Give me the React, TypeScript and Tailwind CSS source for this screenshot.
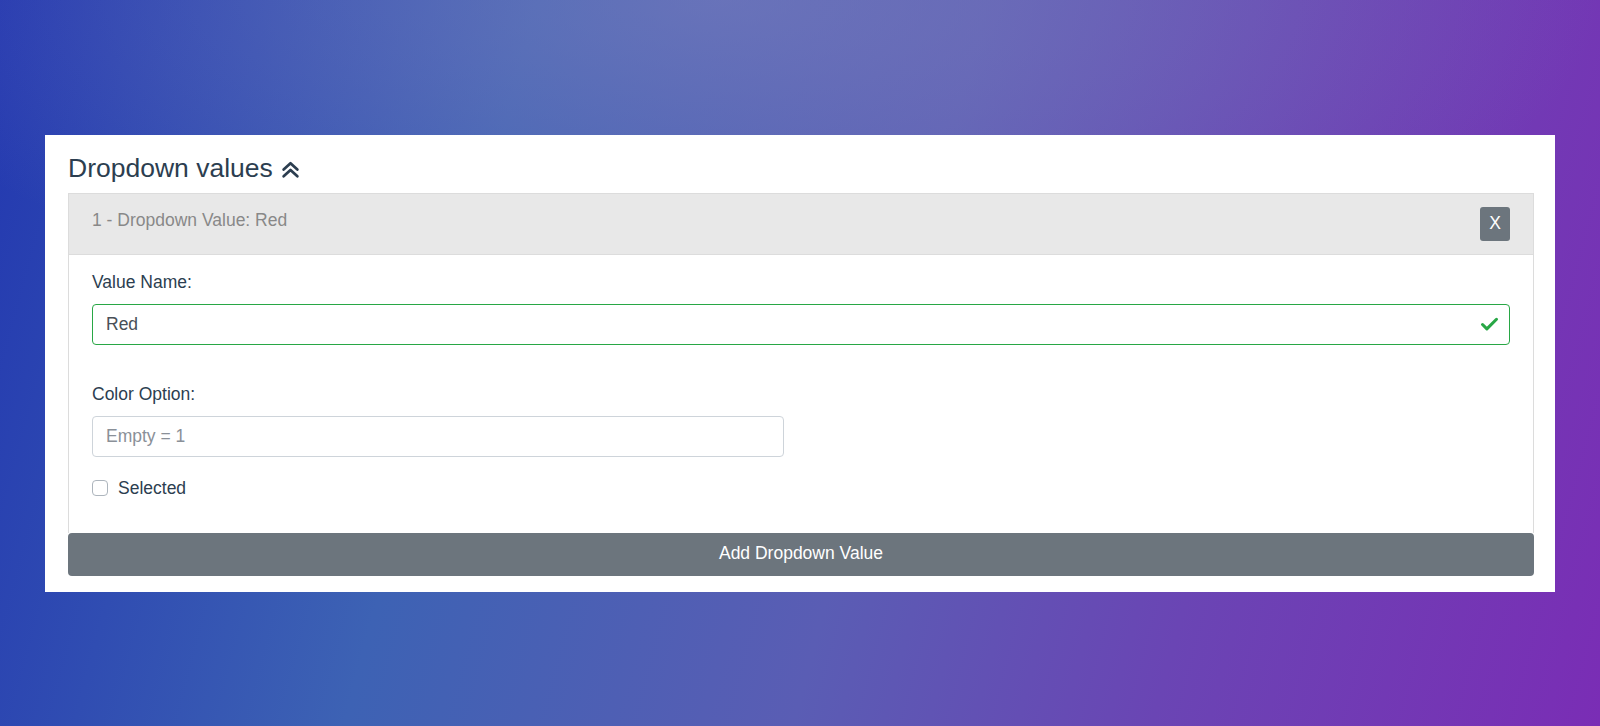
import { Check } from "lucide-react";

function ChevronsUp() {
  return (
    <svg width="19" height="19" viewBox="0 0 18 18" fill="none" className="ml-[8px] mt-[2px]">
      <polyline points="2.5,9 9,3 15.5,9" stroke="#2c3e50" strokeWidth="2.6" strokeLinecap="round" strokeLinejoin="round" />
      <polyline points="2.5,15.5 9,9.5 15.5,15.5" stroke="#2c3e50" strokeWidth="2.6" strokeLinecap="round" strokeLinejoin="round" />
    </svg>
  );
}

export default function App() {
  return (
    <div className="min-h-screen w-full flex items-center px-[45px] bg-[radial-gradient(ellipse_55%_45%_at_45%_0%,rgba(130,130,190,0.55),transparent),linear-gradient(105deg,#2338b0_0%,#3d62b4_30%,#5a5db4_55%,#6a45b4_75%,#7a2db5_100%)] font-['Liberation_Sans',Arial,sans-serif]">
      <div className="w-full bg-white pt-[18px] pb-[16px] px-[23px] pr-[21px]">
        <div className="flex items-center mb-[9px] text-[26.5px] leading-[31px] text-[#2c3e50]">
          <span>Dropdown values</span>
          <ChevronsUp />
        </div>

        <div className="border border-[#dcdcdc] border-b-0">
          <div className="h-[61px] bg-[#e8e8e8] border-b border-[#dcdcdc] flex items-start justify-between px-[23px]">
            <span className="pt-[14px] text-[17.5px] leading-[24px] text-[#888888]">1 - Dropdown Value: Red</span>
            <button className="mt-[13px] w-[30px] h-[34px] bg-[#6c757d] rounded-[3px] text-white text-[17.5px] leading-none">
              X
            </button>
          </div>

          <div className="px-[23px] pt-[15px] pb-[32px] text-[#2c3e50]">
            <label className="block text-[17.5px] leading-[25px] mb-[9px]">Value Name:</label>
            <div className="h-[41px] border border-[#28a745] rounded-[4px] flex items-center justify-between pl-[13px] pr-[9px]">
              <span className="text-[17.5px] text-[#495057]">Red</span>
              <Check size={21} strokeWidth={3.5} color="#28a745" />
            </div>

            <label className="block text-[17.5px] leading-[25px] mt-[37px] mb-[9px]">Color Option:</label>
            <div className="w-[692px] h-[41px] border border-[#ced4da] rounded-[4px] flex items-center pl-[13px]">
              <span className="text-[17.5px] text-[#8a9098]">Empty = 1</span>
            </div>

            <div className="flex items-center mt-[19px]">
              <span className="w-[16px] h-[16px] border border-[#adb5bd] rounded-[4px] bg-white" />
              <span className="ml-[10px] text-[17.5px] leading-[25px]">Selected</span>
            </div>
          </div>
        </div>

        <button className="w-full h-[43px] bg-[#6c757d] rounded-[4px] text-white text-[17.5px] leading-none">
          Add Dropdown Value
        </button>
      </div>
    </div>
  );
}
